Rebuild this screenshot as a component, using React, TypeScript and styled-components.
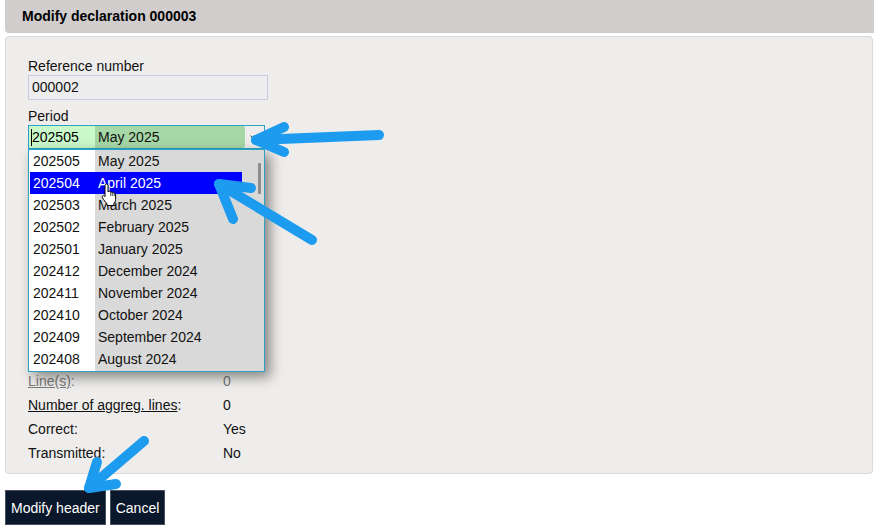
import React from 'react';
import styled, { createGlobalStyle } from 'styled-components';

const GlobalStyle = createGlobalStyle`
  body {
    margin: 0;
    background: #ffffff;
    font-family: "Liberation Sans", Arial, sans-serif;
    font-size: 14px;
    color: #111111;
  }
`;

const periods = [
  ['202505', 'May 2025'],
  ['202504', 'April 2025'],
  ['202503', 'March 2025'],
  ['202502', 'February 2025'],
  ['202501', 'January 2025'],
  ['202412', 'December 2024'],
  ['202411', 'November 2024'],
  ['202410', 'October 2024'],
  ['202409', 'September 2024'],
  ['202408', 'August 2024'],
];

const Root = styled.div`
  position: relative;
  width: 874px;
  height: 531px;
  overflow: hidden;
`;

const Page = styled.div`
  padding-left: 5px;
  width: 869px;
`;

const TitleBar = styled.div`
  height: 33px;
  line-height: 33px;
  padding-left: 17px;
  background: #d1cdcc;
  border-bottom-left-radius: 4px;
  font-weight: bold;
  color: #000;
`;

const Panel = styled.div`
  margin-top: 3px;
  padding: 21px 22px 8px 22px;
  width: 822px;
  background: #eeedeb;
  border: 1px solid #dadada;
  border-radius: 4px;
`;

const FieldLabel = styled.div`
  line-height: 16px;
  margin-top: ${(p: { $first?: boolean }) => (p.$first ? '0' : '8px')};
  margin-bottom: 1px;
`;

const TextBox = styled.div`
  box-sizing: border-box;
  width: 240px;
  height: 25px;
  line-height: 23px;
  padding-left: 3px;
  border: 1px solid #c9c9e4;
  background: #eeeded;
`;

const SelectWrap = styled.div`
  position: relative;
  margin-top: 1px;
  width: 237px;
`;

const SelectBox = styled.div`
  box-sizing: border-box;
  display: flex;
  width: 237px;
  height: 24px;
  border: 1px solid #2aa3c4;
  background: #eeedeb;
`;

const CodeCell = styled.div`
  display: flex;
  align-items: center;
  width: 64px;
  padding-left: 2px;
  background: #c9f8c9;
  color: #000;
`;

const Caret = styled.span`
  width: 1px;
  height: 17px;
  background: #000;
`;

const DescCell = styled.div`
  width: 147px;
  line-height: 22px;
  padding-left: 3px;
  background: #a6d7a6;
  border-radius: 0 2px 2px 0;
`;

const ChevronCell = styled.div`
  flex: 1;
  display: flex;
  align-items: center;
  justify-content: center;
  padding-top: 1px;
`;

const Listbox = styled.div`
  position: absolute;
  top: 24px;
  left: 0;
  box-sizing: border-box;
  width: 237px;
  height: 223px;
  border: 1px solid #2aa3c4;
  background: linear-gradient(to right, #ffffff 0 66px, #d9d9d9 66px);
  box-shadow: 5px 5px 12px rgba(0, 0, 0, 0.45);
  z-index: 5;
`;

const Option = styled.div<{ $active?: boolean }>`
  display: flex;
  width: 212px;
  height: 22px;
  line-height: 22px;
  margin-left: 1px;
  background: ${(p) => (p.$active ? '#0000ff' : 'transparent')};
  color: ${(p) => (p.$active ? '#ffffff' : '#111111')};
`;

const OptionCode = styled.span`
  width: 62px;
  padding-left: 3px;
`;

const OptionDesc = styled.span`
  padding-left: 3px;
`;

const ScrollThumb = styled.div`
  position: absolute;
  top: 13px;
  right: 3px;
  width: 3px;
  height: 31px;
  background: #8c8c8c;
  border-radius: 1px;
`;

const InfoGrid = styled.div`
  margin-top: 220px;
  display: grid;
  grid-template-columns: 195px auto;
  grid-auto-rows: 24px;
  align-items: center;
`;

const InfoCell = styled.div<{ $muted?: boolean }>`
  color: ${(p) => (p.$muted ? '#7a7a7a' : '#111111')};
`;

const Underlined = styled.span`
  text-decoration: underline;
`;

const ButtonRow = styled.div`
  display: flex;
  gap: 4px;
  margin-top: 16px;
`;

const Button = styled.button`
  height: 35px;
  padding: 0 5px;
  border: 1px solid #46525f;
  background: #0b182b;
  color: #ffffff;
  font-family: "Liberation Sans", Arial, sans-serif;
  font-size: 14px;
`;

const Annotations = styled.svg`
  position: absolute;
  top: 0;
  left: 0;
  pointer-events: none;
  z-index: 10;
`;

const HandCursor = styled.svg`
  position: absolute;
  left: 101px;
  top: 183px;
  z-index: 8;
`;

const Chevron = () => (
  <svg width="9" height="6" viewBox="0 0 9 6">
    <path d="M0.5 0.5 L4.5 5 L8.5 0.5" fill="none" stroke="#444" strokeWidth="1" />
  </svg>
);

export default function App() {
  return (
    <Root>
      <GlobalStyle />
      <Page>
        <TitleBar>Modify declaration 000003</TitleBar>
        <Panel>
          <FieldLabel $first>Reference number</FieldLabel>
          <TextBox>000002</TextBox>
          <FieldLabel>Period</FieldLabel>
          <SelectWrap>
            <SelectBox>
              <CodeCell>
                <Caret />
                202505
              </CodeCell>
              <DescCell>May 2025</DescCell>
              <ChevronCell>
                <Chevron />
              </ChevronCell>
            </SelectBox>
            <Listbox>
              {periods.map(([code, label]) => (
                <Option key={code} $active={code === '202504'}>
                  <OptionCode>{code}</OptionCode>
                  <OptionDesc>{label}</OptionDesc>
                </Option>
              ))}
              <ScrollThumb />
            </Listbox>
          </SelectWrap>
          <InfoGrid>
            <InfoCell $muted>
              <Underlined>Line(s)</Underlined>:
            </InfoCell>
            <InfoCell $muted>0</InfoCell>
            <InfoCell>
              <Underlined>Number of aggreg. lines</Underlined>:
            </InfoCell>
            <InfoCell>0</InfoCell>
            <InfoCell>Correct:</InfoCell>
            <InfoCell>Yes</InfoCell>
            <InfoCell>Transmitted:</InfoCell>
            <InfoCell>No</InfoCell>
          </InfoGrid>
        </Panel>
        <ButtonRow>
          <Button>Modify header</Button>
          <Button>Cancel</Button>
        </ButtonRow>
      </Page>
      <HandCursor width="17" height="24" viewBox="0 0 17 24">
        <path
          d="M5.5 1 C6.3 1 7 1.7 7 2.5 V9 C7.4 8.3 8.2 8 9 8.3 C9.5 8.5 9.8 9 9.8 9.4 C10.4 8.9 11.4 9 11.8 9.7 C12.5 9.4 13.5 9.8 13.8 10.6 C14.3 10.8 14.6 11.3 14.6 11.8 V16.5 C14.6 18.2 13.7 19.7 12.8 20.6 V22.5 H6 V20.8 C4.6 19.4 2.6 16.8 1.5 14.8 C1 13.8 1.4 12.6 2.5 12.6 C3.2 12.6 3.7 13 4 13.6 V2.5 C4 1.7 4.7 1 5.5 1 Z"
          fill="#ffffff"
          stroke="#000"
          strokeWidth="1"
          strokeLinejoin="round"
        />
        <path d="M9.8 9.4 V13 M11.8 9.7 V13 M13.8 10.6 V13" stroke="#000" strokeWidth="0.8" fill="none" />
      </HandCursor>
      <Annotations width="874" height="531" viewBox="0 0 874 531">
        <g fill="none" stroke="#1c9bef" strokeWidth="10" strokeLinecap="round" strokeLinejoin="round">
          <path d="M379 135 L256 140" />
          <path d="M284 127 L256 140 L284 152" />
          <path d="M312 240 L219 184" />
          <path d="M251 188 L219 184 L233 219" />
          <path d="M144 441 L89 488" />
          <path d="M97 462 L89 488 L116 484" />
        </g>
      </Annotations>
    </Root>
  );
}
